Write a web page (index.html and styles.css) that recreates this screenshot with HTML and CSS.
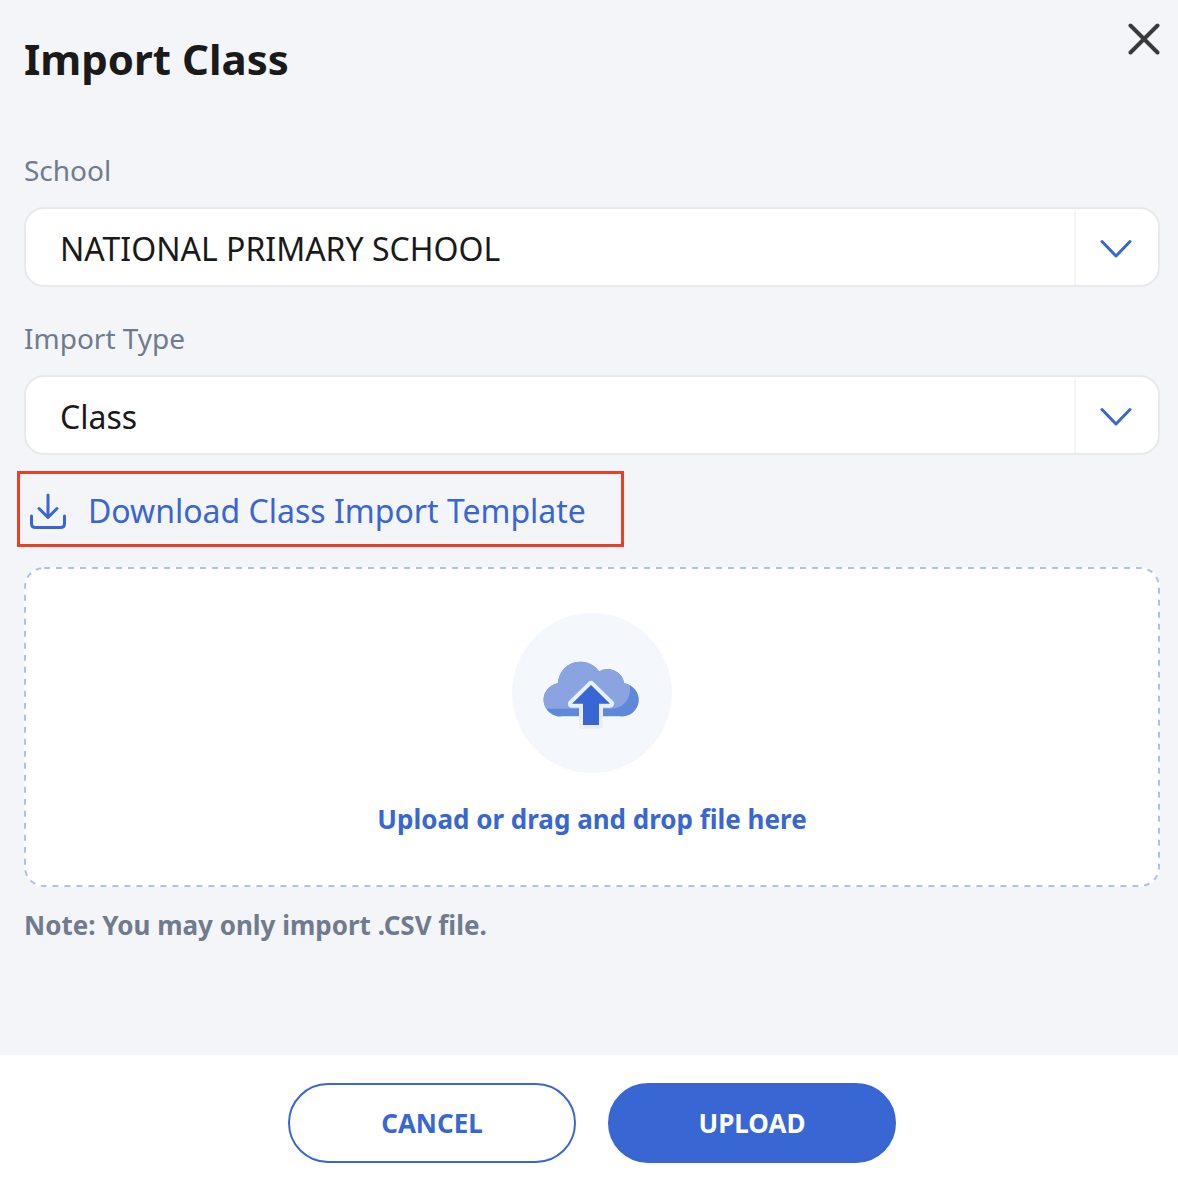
FILE: index.html
```html
<!DOCTYPE html>
<html lang="en">
<head>
<meta charset="utf-8">
<meta name="viewport" content="width=device-width, initial-scale=1">
<title>Import Class</title>
<link rel="stylesheet" href="styles.css">
</head>
<body>
<form class="dialog">
  <main class="content">
    <header class="header">
      <h1 class="title">Import Class</h1>
      <button class="close" type="button" aria-label="Close">
        <svg width="32" height="32" viewBox="0 0 32 32" aria-hidden="true"><path d="M2.5 2.5 29.500 29.500M29.500 2.500 2.500 29.500"/></svg>
      </button>
    </header>

    <div class="field">
      <label class="label" for="school">School</label>
      <div class="select">
        <select class="select-input" id="school"><option>NATIONAL PRIMARY SCHOOL</option></select>
        <span class="select-arrow"><svg width="32" height="20" viewBox="0 0 32 20" aria-hidden="true"><path d="M2 2.500 16 17 30 2.500"/></svg></span>
      </div>
    </div>

    <div class="field">
      <label class="label" for="type">Import Type</label>
      <div class="select">
        <select class="select-input" id="type"><option>Class</option></select>
        <span class="select-arrow"><svg width="32" height="20" viewBox="0 0 32 20" aria-hidden="true"><path d="M2 2.500 16 17 30 2.500"/></svg></span>
      </div>
    </div>

    <a class="download" href="#">
      <svg width="36" height="36" viewBox="0 0 36 36" aria-hidden="true"><path d="M18 2V24M9 15.500 18 24.500 27 15.500M1.500 23V30.500Q1.500 34.500 5.500 34.500H30.500Q34.500 34.500 34.500 30.500V23"/></svg>
      <span>Download Class Import Template</span>
    </a>

    <label class="dropzone" for="file">
      <svg class="dropzone-outline" aria-hidden="true"><rect width="100%" height="100%" rx="20"/></svg>
      <svg width="160" height="160" viewBox="0 0 160 160" aria-hidden="true">
        <circle cx="80" cy="80" r="80" fill="#f4f8fd"/>
        <clipPath id="cloud"><path d="M50.500 103.300A16.600 16.600 0 0 1 46 70.300A22.500 22.500 0 0 1 87 58.400A17 17 0 0 1 112.300 70.300A16.600 16.600 0 0 1 108 103.300Z"/></clipPath>
        <g clip-path="url(#cloud)">
          <path fill="#5f87da" d="M30 46H128V104H30Z"/>
          <path fill="#89a4e1" d="M30 46H118V77A18.700 18.700 0 0 1 99.300 95.700H30Z"/>
        </g>
        <path d="M79 72 98 90.700H87V112H71V90.700H60Z" fill="#3866d3" stroke="#e9eefa" stroke-width="8" stroke-linejoin="round" paint-order="stroke"/>
      </svg>
      <span class="dropzone-text">Upload or drag and drop file here</span>
      <input class="file-input" id="file" type="file" accept=".csv">
    </label>
    <p class="note">Note: You may only import .CSV file.</p>
  </main>
  <footer class="footer">
    <button class="button button-outline" type="button">CANCEL</button>
    <button class="button button-solid" type="submit">UPLOAD</button>
  </footer>
</form>
</body>
</html>
```
FILE: styles.css
```css
* { box-sizing: border-box; }

body {
  margin: 0;
  background: #fff;
  color: #1a1a1a;
  font-family: "Noto Sans", sans-serif;
}

.dialog {
  display: flex;
  flex-direction: column;
  min-height: 100vh;
}

.content {
  flex: 1;
  display: flex;
  flex-direction: column;
  padding: 23px 18px 24px 24px;
  background: #f4f5f9;
}

.header {
  display: flex;
  justify-content: space-between;
  align-items: flex-start;
  margin-bottom: 56px;
}

.title {
  margin: 0;
  font-size: 42px;
  line-height: 72px;
  font-weight: 700;
}

.close {
  padding: 0;
  border: 0;
  background: none;
  line-height: 0;
  cursor: pointer;
}

svg {
  flex: none;
  display: block;
}

.close path,
.select path,
.download path {
  fill: none;
  stroke: #3866d3;
  stroke-width: 3;
  stroke-linecap: round;
  stroke-linejoin: round;
}

.close path {
  stroke: #3a3a3a;
  stroke-width: 4;
}

.field {
  display: flex;
  flex-direction: column;
  gap: 18px;
}

.field + .field { margin-top: 32px; }

.label {
  color: #6f7b8f;
  font-size: 28px;
  line-height: 38px;
}

.select { position: relative; }

.select-input {
  display: block;
  width: 100%;
  height: 80px;
  padding: 2px 96px 0 34px;
  border: 2px solid #e8e9ed;
  border-radius: 20px;
  background: #fff;
  color: #1a1a1a;
  font: inherit;
  font-size: 32px;
  appearance: none;
}

.select-arrow {
  position: absolute;
  top: 4px;
  right: 2px;
  bottom: 2px;
  display: flex;
  align-items: center;
  justify-content: center;
  width: 84px;
  padding: 2px 2px 0 0;
  border-left: 2px solid #f4f5f9;
  pointer-events: none;
}

.download {
  display: flex;
  align-items: center;
  align-self: flex-start;
  gap: 22px;
  margin: 16px 0 20px -7px;
  padding: 14px 35px 10px 10px;
  border: 3px solid #ea4025;
  color: #3866d3;
  font-size: 32px;
  line-height: 46px;
  text-decoration: none;
}

.dropzone {
  position: relative;
  display: flex;
  flex-direction: column;
  align-items: center;
  gap: 28px;
  padding: 46px 24px 50px;
  border-radius: 20px;
  background: #fff;
  overflow: hidden;
  cursor: pointer;
}

.dropzone-outline {
  position: absolute;
  inset: 0;
  width: 100%;
  height: 100%;
}

/* Half of the stroke is cut off at the edge, which leaves a 2px line. */
.dropzone-outline rect {
  fill: none;
  stroke: #afc0ec;
  stroke-width: 4;
  stroke-dasharray: 6 6;
}

.dropzone-text {
  color: #3866d3;
  font-size: 26px;
  line-height: 36px;
  font-weight: 700;
}

.file-input {
  position: absolute;
  width: 1px;
  height: 1px;
  opacity: 0;
}

.note {
  margin: 20px 0 0;
  color: #6f7b8f;
  font-size: 26px;
  line-height: 36px;
  font-weight: 700;
}

.footer {
  display: flex;
  justify-content: center;
  gap: 32px;
  padding: 28px 18px 19px 24px;
  background: #fff;
}

.button {
  width: 288px;
  height: 80px;
  border: 2px solid #3866d3;
  border-radius: 40px;
  font: inherit;
  font-size: 26px;
  font-weight: 700;
  cursor: pointer;
}

.button-outline {
  background: #fff;
  color: #3866d3;
}

.button-solid {
  background: #3866d3;
  color: #fff;
}
```
